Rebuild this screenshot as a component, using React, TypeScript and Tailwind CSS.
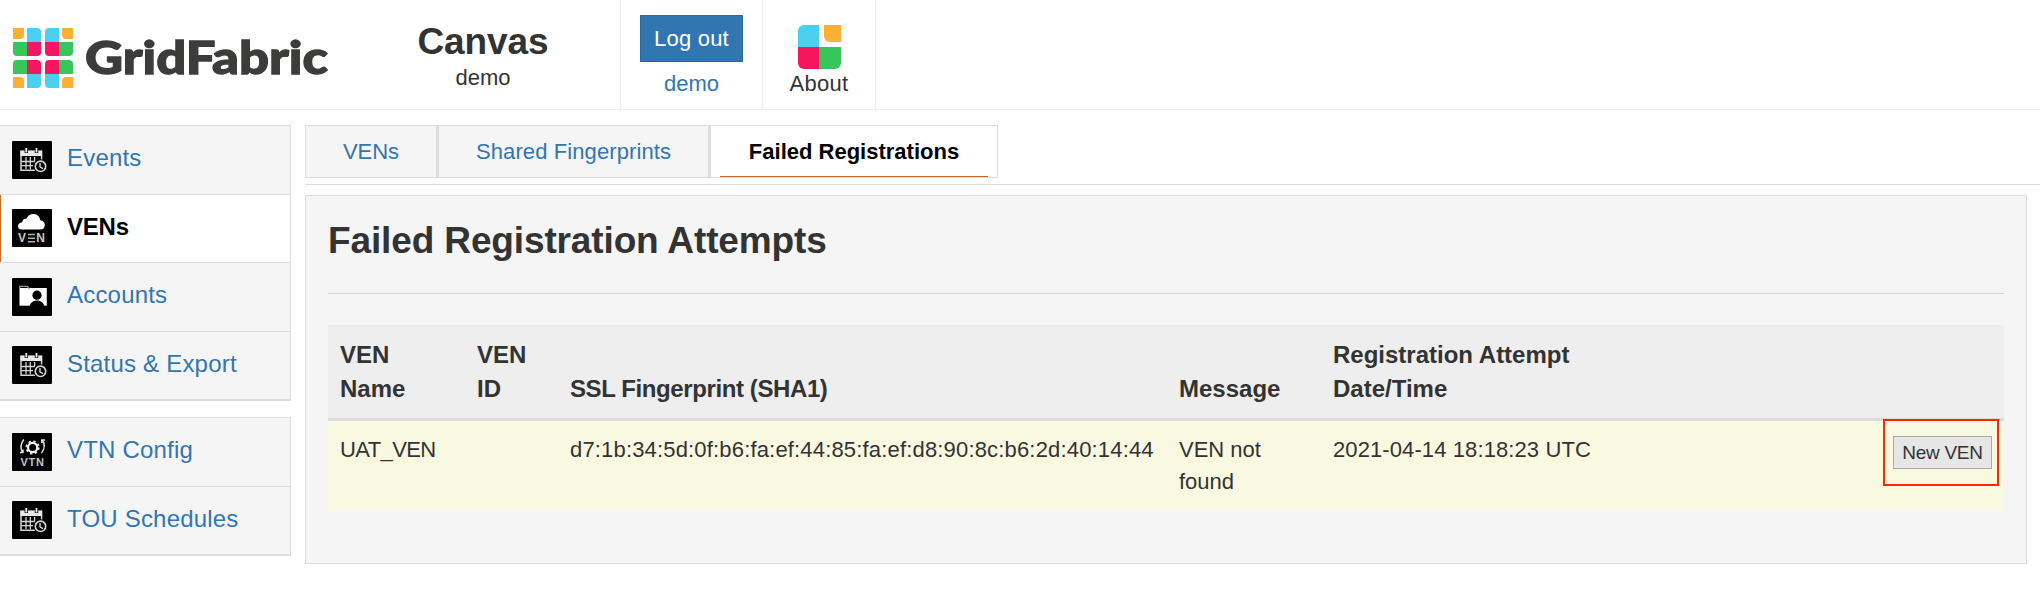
import clsx from 'clsx'
import type { ReactNode } from 'react'

function CalendarIcon() {
  return (
    <svg viewBox="0 0 40 38" className="h-[38px] w-10 shrink-0">
      <rect width="40" height="38" rx="1" fill="#000" />
      <g fill="none" stroke="#d4d4d4" strokeWidth="1.5">
        <path d="M23 29.2H9V10.5h20.6V19" />
        <path d="M9 20.5h14M9 24.7h12M14 16v12M18.3 16v12M22.6 16v5" strokeWidth="1.3" />
      </g>
      <path d="M8.5 9.5h21.5v5.5H8.5z" fill="#e8e8e8" />
      <path d="M14.3 7v5M24.5 7v5" stroke="#000" strokeWidth="3.4" />
      <path d="M14.3 7v4.6M24.5 7v4.6" stroke="#eee" strokeWidth="1.8" />
      <circle cx="28.5" cy="25.3" r="7" fill="#000" />
      <circle cx="28.5" cy="25.3" r="5.2" fill="none" stroke="#d8d8d8" strokeWidth="1.6" />
      <path d="M28 22v3.8l3 1.8" fill="none" stroke="#d8d8d8" strokeWidth="1.4" />
    </svg>
  )
}

function VenIcon() {
  return (
    <svg viewBox="0 0 40 38" className="h-[38px] w-10 shrink-0">
      <rect width="40" height="38" rx="1" fill="#000" />
      <path
        d="M9.5 20.5C7 20.5 6 19 6 17.2c0-2.2 1.7-3.7 4.2-3.9C10.4 10.6 12 9.4 14.6 9.4 15.8 6.4 18.4 5 21.4 5c3.6 0 6.4 2.4 6.9 6.2 2.8.4 4.5 2.2 4.5 4.7 0 2.9-1.9 4.6-4.6 4.6z"
        fill="#fff"
      />
      <g fill="#c8c8c8" fontSize="12" className="font-['Liberation_Sans',sans-serif] font-bold">
        <text x="6" y="33.3">V</text>
        <text x="24.3" y="33.3">N</text>
      </g>
      <path d="M16 25.4h7M16 29.2h7M16 32.8h7" stroke="#b0b0b0" strokeWidth="1.5" />
    </svg>
  )
}

function AccountsIcon() {
  return (
    <svg viewBox="0 0 40 38" className="h-[38px] w-10 shrink-0">
      <rect width="40" height="38" rx="1" fill="#000" />
      <path d="M7.5 27.7V10h27.3v17.7z" fill="#fff" />
      <path d="M7.8 10V8.4h7.6l2 2.4" fill="none" stroke="#999" strokeWidth="1.2" />
      <circle cx="25" cy="17.2" r="4.6" fill="#000" />
      <path d="M17.5 29c.6-4.400 3.600-6.600 7.500-6.600s6.900 2.200 7.500 6.600z" fill="#000" />
    </svg>
  )
}

function VtnIcon() {
  return (
    <svg viewBox="0 0 40 38" className="h-[38px] w-10 shrink-0">
      <rect width="40" height="38" rx="1" fill="#000" />
      <circle cx="20.6" cy="14.5" r="4.6" fill="none" stroke="#f2f2f2" strokeWidth="2.2" />
      <circle cx="20.6" cy="14.5" r="6.2" fill="none" stroke="#e4e4e4" strokeWidth="1.8" strokeDasharray="2.43 2.43" />
      <path
        d="M11.800 6.500c-3 4-3.500 9-1.500 13M8 19.500h3v-3M29.500 20c3-4 3.500-9 1-13M33 7h-3.200v3"
        fill="none"
        stroke="#ddd"
        strokeWidth="1.5"
      />
      <text x="8.6" y="33" fill="#c4c4c4" fontSize="11" textLength="23.5" className="font-['Liberation_Sans',sans-serif] font-bold">
        VTN
      </text>
    </svg>
  )
}

function GridFabricLogo() {
  return (
    <svg viewBox="0 0 320 60" className="h-[60px] w-80">
      <g fill="#fbb034">
        <path d="M0 0h11v7a4 4 0 0 1-4 4H0z" />
        <path d="M60 0H49v7a4 4 0 0 0 4 4h7z" />
        <path d="M0 60h11v-7a4 4 0 0 0-4-4H0z" />
        <path d="M60 60H49v-7a4 4 0 0 1 4-4h7z" />
      </g>
      <g fill="#4acfee">
        <path d="M14 14V0h10a4 4 0 0 1 4 4v10z" />
        <path d="M46 14V0H36a4 4 0 0 0-4 4v10z" />
        <path d="M14 46v14h10a4 4 0 0 0 4-4V46z" />
        <path d="M46 46v14H36a4 4 0 0 1-4-4V46z" />
      </g>
      <g fill="#36c65a">
        <path d="M14 14H0v10a4 4 0 0 0 4 4h10z" />
        <path d="M46 14h14v10a4 4 0 0 1-4 4H46z" />
        <path d="M14 46H0V36a4 4 0 0 1 4-4h10z" />
        <path d="M46 46h14V36a4 4 0 0 0-4-4H46z" />
      </g>
      <g fill="#f6165f">
        <path d="M14 14h14v10a4 4 0 0 1-4 4H14z" />
        <path d="M46 14H32v10a4 4 0 0 0 4 4h10z" />
        <path d="M14 46h14V36a4 4 0 0 0-4-4H14z" />
        <path d="M46 46H32V36a4 4 0 0 1 4-4h10z" />
      </g>
      <text
        x="72"
        y="46"
        fontSize="46"
        textLength="243"
        lengthAdjust="spacingAndGlyphs"
        fill="#3c3c3b"
        stroke="#3c3c3b"
        strokeWidth="1.3"
        className="font-['Lato',sans-serif] font-black"
      >
        GridFabric
      </text>
    </svg>
  )
}

function AboutIcon() {
  return (
    <svg viewBox="0 0 43 44" className="h-11 w-[43px]">
      <path d="M0 22V6a6 6 0 0 1 6-6h15v22z" fill="#4acfee" />
      <path d="M26 0h17v17H32a6 6 0 0 1-6-6z" fill="#fbb034" />
      <path d="M0 22h21v22H6a6 6 0 0 1-6-6z" fill="#f6165f" />
      <path d="M21 22h22v16a6 6 0 0 1-6 6H21z" fill="#36c65a" />
    </svg>
  )
}

interface NavItem {
  label: string
  icon: ReactNode
  active?: boolean
}

const mainNav: NavItem[] = [
  { label: 'Events', icon: <CalendarIcon /> },
  { label: 'VENs', icon: <VenIcon />, active: true },
  { label: 'Accounts', icon: <AccountsIcon /> },
  { label: 'Status & Export', icon: <CalendarIcon /> },
]

const configNav: NavItem[] = [
  { label: 'VTN Config', icon: <VtnIcon /> },
  { label: 'TOU Schedules', icon: <CalendarIcon /> },
]

const tabs = [
  { label: 'VENs', style: 'w-[130px]' },
  { label: 'Shared Fingerprints', style: 'w-[272px] border-l-3 tracking-[0.1px]' },
  { label: 'Failed Registrations', style: 'w-[289px] border-l-3', active: true },
]

function NavGroup({ items }: { items: NavItem[] }) {
  return (
    <ul className="border-r border-b-2 border-[#ddd]">
      {items.map(item => (
        <li
          key={item.label}
          className={clsx(
            'relative flex h-[68.5px] items-center gap-[15px] border-t border-[#ddd] pl-3 text-2xl',
            item.active ? 'bg-white font-bold tracking-[-0.2px] text-black' : 'bg-[#f5f5f5] tracking-[0.2px] text-[#3276b1]'
          )}
        >
          {item.active && <span className="absolute inset-y-0 left-0 w-px bg-[#d2691e]" />}
          {item.icon}
          <a href="#" className="pb-[3px]">{item.label}</a>
        </li>
      ))}
    </ul>
  )
}

export default function App() {
  return (
    <div className="h-[600px] overflow-hidden bg-white font-['Liberation_Sans',Arial,sans-serif] text-[22px] leading-8 text-[#333]">
      {/* Header */}
      <header className="flex h-[110px] border-b border-[#eee]">
        <div className="w-[346px] pt-7 pl-[13px]">
          <GridFabricLogo />
        </div>
        <div className="flex w-[274px] flex-col items-center pt-[22px]">
          <h1 className="text-[37px] leading-10 font-bold tracking-[-0.1px]">Canvas</h1>
          <span>demo</span>
        </div>
        <div className="flex w-[142px] flex-col items-center border-l border-[#eee] pt-[15px]">
          <button className="h-[47px] w-[103px] border border-[#2c699d] bg-[#3276b1] tracking-[0.2px] text-white">Log out</button>
          <a href="#" className="mt-1.5 text-[#3276b1]">demo</a>
        </div>
        <div className="flex w-[114px] flex-col items-center border-x border-[#eee] pt-[25px]">
          <AboutIcon />
          <span className="-mt-px tracking-[0.3px]">About</span>
        </div>
      </header>

      <div className="flex pt-[15px]">
        {/* Sidebar */}
        <nav className="flex w-[291px] shrink-0 flex-col gap-4">
          <NavGroup items={mainNav} />
          <NavGroup items={configNav} />
        </nav>

        <main className="ml-3.5 grow">
          <div className="border-b border-[#ddd] pb-1.5">
            <div className="flex h-[53px] w-fit border border-[#ddd]">
              {tabs.map(tab => (
                <div
                  key={tab.label}
                  className={clsx(
                    'relative flex items-center justify-center border-[#ddd]',
                    tab.style,
                    tab.active ? 'bg-white font-bold text-black' : 'bg-[#f5f5f5] text-[#3276b1]'
                  )}
                >
                  <a href="#">{tab.label}</a>
                  {tab.active && <span className="absolute inset-x-[9px] bottom-0 h-px bg-[#c4682b]" />}
                </div>
              ))}
            </div>
          </div>

          <section className="mt-2.5 mr-[13px] h-[369px] border border-[#ddd] bg-[#f5f5f5] px-[22px] pt-[25px]">
            <h2 className="h-[73px] border-b border-[#d5d5d5] text-[37px] leading-10 font-bold tracking-[-0.13px]">
              Failed Registration Attempts
            </h2>

            <table className="mt-[31px] w-full table-fixed border-collapse text-left">
              <colgroup>
                <col className="w-[137px]" />
                <col className="w-[93px]" />
                <col className="w-[609px]" />
                <col className="w-[154px]" />
                <col className="w-[300px]" />
                <col />
              </colgroup>
              <thead>
                <tr className="bg-[#eee] align-bottom text-2xl leading-[34px] [&>th]:px-3 [&>th]:pt-[13px] [&>th]:pb-3">
                  <th>VEN<br />Name</th>
                  <th>VEN<br />ID</th>
                  <th className="tracking-[-0.4px]">SSL Fingerprint (SHA1)</th>
                  <th>Message</th>
                  <th>Registration Attempt Date/Time</th>
                  <th />
                </tr>
                <tr className="h-[3px] bg-[#ddd]">
                  <td colSpan={6} />
                </tr>
              </thead>
              <tbody>
                <tr className="bg-[#f9f9e1] align-top [&>td]:px-3 [&>td]:pt-[13px] [&>td]:pb-3">
                  <td className="tracking-[-0.6px]">UAT_VEN</td>
                  <td />
                  <td className="tracking-[0.17px] whitespace-nowrap">d7:1b:34:5d:0f:b6:fa:ef:44:85:fa:ef:d8:90:8c:b6:2d:40:14:44</td>
                  <td>VEN not found</td>
                  <td className="tracking-[0.1px] whitespace-nowrap">2021-04-14 18:18:23 UTC</td>
                  <td>
                    <div className="relative mt-0.5 ml-auto w-[99px]">
                      <button className="block h-[33px] w-full border border-[#aaa] bg-[#e6e6e6] text-[19px] leading-[31px] tracking-[-0.3px]">
                        New VEN
                      </button>
                      {/* highlight around the action */}
                      <span className="absolute -inset-y-[17px] -right-[7px] -left-2.5 border-2 border-[#ff2600]" />
                    </div>
                  </td>
                </tr>
              </tbody>
            </table>
          </section>
        </main>
      </div>
    </div>
  )
}
